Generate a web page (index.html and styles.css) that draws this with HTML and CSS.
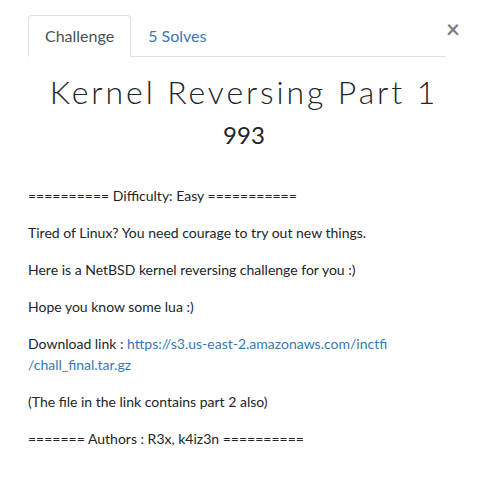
FILE: index.html
```html
<!DOCTYPE html>
<html>
<head>
<meta charset="utf-8">
<link rel="stylesheet" href="styles.css">
</head>
<body>
<div class="modal">
  <div class="header">
    <ul class="tabs">
      <li class="tab active">Challenge</li>
      <li class="tab"><a href="#">5 Solves</a></li>
    </ul>
    <button class="close">&times;</button>
  </div>
  <div class="content">
    <h2 class="name">Kernel Reversing Part 1</h2>
    <h3 class="value">993</h3>
    <div class="desc">
      <p>========== Difficulty: Easy ===========</p>
      <p>Tired of Linux? You need courage to try out new things.</p>
      <p>Here is a NetBSD kernel reversing challenge for you :)</p>
      <p>Hope you know some lua :)</p>
      <p>Download link : <a href="#">https://s3.us-east-2.amazonaws.com/inctfi<wbr>/chall_final.tar.gz</a></p>
      <p>(The file in the link contains part 2 also)</p>
      <p>======= Authors : R3x, k4iz3n ==========</p>
    </div>
  </div>
</div>
</body>
</html>
```
FILE: styles.css
```css
html, body {
  margin: 0;
  padding: 0;
  background: #fff;
}
body {
  font-family: "Lato", "Open Sans", sans-serif;
  color: #212529;
  font-size: 14px;
  line-height: 1.5;
}
.modal {
  padding: 15px 25px 0 28px;
}
.header {
  display: flex;
  align-items: flex-start;
  margin-right: -14px;
}
.tabs {
  flex: 1;
  display: flex;
  list-style: none;
  margin: 0;
  padding: 0;
  border-bottom: 1px solid #dee2e6;
}
.tab {
  font-size: 16px;
  line-height: 24px;
  padding: 8px 16px;
  border: 1px solid transparent;
  border-top-left-radius: 4px;
  border-top-right-radius: 4px;
  margin-bottom: -1px;
}
.tab.active {
  color: #495057;
  border-color: #dee2e6 #dee2e6 #fff;
  background: #fff;
}
.tab a {
  color: #337ab7;
  text-decoration: none;
}
.close {
  width: 14px;
  margin: 0 14px 0 0;
  padding: 0;
  border: 0;
  background: none;
  font-family: "Lato", sans-serif;
  font-size: 24px;
  font-weight: 700;
  line-height: 28px;
  color: #000;
  opacity: 0.5;
  text-align: center;
}
.name {
  margin: 0 0 8px;
  padding-top: 16px;
  text-align: center;
  font-family: "Lato", sans-serif;
  font-weight: 300;
  font-size: 32px;
  letter-spacing: 2.9px;
  line-height: 1.2;
  color: #212529;
}
.value {
  margin: 0 0 9px;
  text-align: center;
  font-weight: 400;
  font-size: 24px;
  line-height: 1.3;
}
.desc {
  padding-top: 25px;
}
.desc p {
  margin: 0 0 16px;
}
.desc a {
  color: #337ab7;
  text-decoration: none;
}
```
